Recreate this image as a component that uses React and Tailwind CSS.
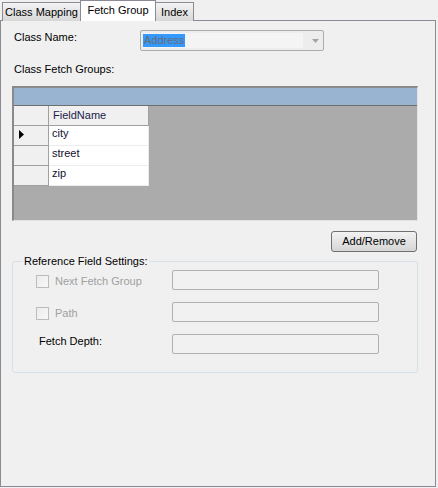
import React from 'react';

const rows = ['city', 'street', 'zip'];

function Tab({ label, selected, width }) {
    if (selected) {
        return (
            <div className={`relative z-10 -ml-px h-[21px] ${width} border border-b-0 border-[#898c95] bg-white pt-[3px] text-center leading-[13px]`}>
                {label}
            </div>
        );
    }
    return (
        <div className={`-ml-px first:ml-0 h-[19px] ${width} border border-b-0 border-[#898c95] bg-linear-to-b from-[#f3f3f3] to-[#d8d8d8] pt-[3px] text-center leading-[13px]`}>
            {label}
        </div>
    );
}

function DisabledCheck({ label }) {
    return (
        <div className="flex w-[159px] items-start pl-[23px] pt-[5px]">
            <div className="h-[13px] w-[13px] border border-[#bcbcbc] bg-linear-to-br from-[#ececec] to-[#f8f8f8]"></div>
            <span className="ml-[6px] leading-[13px] text-[#a0a0a0]">{label}</span>
        </div>
    );
}

function TextBox() {
    return <div className="h-[20px] w-[207px] rounded-[2px] border border-[#b1b1b1] bg-[#f1f1f1]"></div>;
}

export default function App() {
    return (
        <div className="h-[488px] w-[438px] bg-[#f0f0f0] font-['Liberation_Sans',Arial,sans-serif] text-[11px] text-black">
            {/* tab strip */}
            <div className="flex h-[21px] items-end pl-[2px]">
                <Tab label="Class Mapping" width="w-[79px]" />
                <Tab label="Fetch Group" width="w-[76px]" selected />
                <Tab label="Index" width="w-[39px]" />
            </div>

            {/* tab page */}
            <div className="-mt-px h-[467px] w-[436px] border border-[#898c95] bg-[#f0f0f0]">
                <div className="mt-[9px] flex h-[21px]">
                    <span className="ml-[13px] w-[126px] pt-[1px] leading-[13px]">Class Name:</span>
                    <div className="flex h-[21px] w-[184px] items-center rounded-[2px] border border-[#acacac] bg-[#ededed] pl-[2px] pr-[4px]">
                        <div className="flex h-[15px] w-[160px] items-center bg-[#f4f4f4]">
                            <span className="bg-[#3399ff] px-px leading-[13px] text-[#6b6b6b]">Address</span>
                        </div>
                        <svg className="ml-auto" width="7" height="4" viewBox="0 0 7 4">
                            <path d="M0 0 H7 L3.5 4 Z" fill="#a3a3a3" />
                        </svg>
                    </div>
                </div>

                <div className="ml-[13px] mt-[12px] leading-[13px]">Class Fetch Groups:</div>

                {/* data grid */}
                <div className="ml-[11px] mt-[10px] flex h-[135px] w-[406px] flex-col border-l-2 border-t-2 border-b border-r border-l-[#8a8a8a] border-t-[#8a8a8a] border-b-[#e2e2e2] border-r-[#e2e2e2] bg-[#ababab]">
                    <div className="h-[18px] border-b border-[#6e6e6e] bg-[#99b4d1]"></div>
                    <div className="flex h-[20px]">
                        <div className="h-[20px] w-[35px] border-b border-r border-[#a0a0a0] bg-[#f0f0f0]"></div>
                        <div className="h-[20px] w-[100px] border-b border-r border-[#a0a0a0] bg-[#f0f0f0] pl-[4px] pt-[3px] leading-[13px] text-[#1b1b4a]">
                            FieldName
                        </div>
                    </div>
                    {rows.map((r, i) => (
                        <div key={r} className="flex h-[20px]">
                            <div className="flex h-[20px] w-[35px] items-start border-b border-r border-[#a0a0a0] bg-[#f0f0f0] pl-[5px] pt-[4px]">
                                {i === 0 && (
                                    <svg width="5" height="9" viewBox="0 0 5 9">
                                        <path d="M0 0 L5 4.5 L0 9 Z" fill="#000" />
                                    </svg>
                                )}
                            </div>
                            <div className="h-[20px] w-[100px] border-b border-r border-[#ececec] bg-white pl-[3px] pt-[1px] leading-[13px] text-[#101030]">
                                {r}
                            </div>
                        </div>
                    ))}
                </div>

                <div className="mr-[18px] mt-[10px] flex justify-end">
                    <button className="h-[21px] w-[86px] rounded-[3px] border border-[#707070] bg-linear-to-b from-[#f2f2f2] to-[#d6d6d6] leading-[13px]">
                        Add/Remove
                    </button>
                </div>

                {/* group box */}
                <fieldset className="ml-[11px] mt-[3px] w-[406px] rounded-[3px] border border-[#d5dfe5] pb-[18px]">
                    <legend className="ml-[10px] px-px leading-[13px]">Reference Field Settings:</legend>
                    <div className="mt-[2px] flex h-[20px] items-start">
                        <DisabledCheck label="Next Fetch Group" />
                        <TextBox />
                    </div>
                    <div className="mt-[12px] flex h-[20px] items-start">
                        <DisabledCheck label="Path" />
                        <TextBox />
                    </div>
                    <div className="mt-[12px] flex h-[20px] items-start">
                        <span className="w-[159px] pl-[26px] pt-px leading-[13px]">Fetch Depth:</span>
                        <TextBox />
                    </div>
                </fieldset>
            </div>
        </div>
    );
}
